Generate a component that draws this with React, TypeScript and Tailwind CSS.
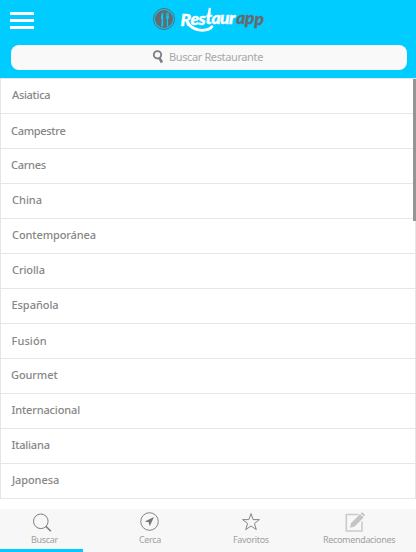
import React from "react";

const categories = [
  { name: "Asiatica", cls: "pl-[11px] tracking-[-0.3px]" },
  { name: "Campestre", cls: "pl-[10px] pt-[2px] tracking-[-0.3px]" },
  { name: "Carnes", cls: "pl-[10px] tracking-[-0.3px]" },
  { name: "China", cls: "pl-[11px] tracking-[0px]" },
  { name: "Contemporánea", cls: "pl-[11px] tracking-[-0.1px]" },
  { name: "Criolla", cls: "pl-[11px] tracking-[-0.1px]" },
  { name: "Española", cls: "pl-[10.5px] tracking-[-0.05px]" },
  { name: "Fusión", cls: "pl-[10.5px] pt-[2px] tracking-[0.1px]" },
  { name: "Gourmet", cls: "pl-[10px] tracking-[-0.1px]" },
  { name: "Internacional", cls: "pl-[10.5px] tracking-[-0.15px]" },
  { name: "Italiana", cls: "pl-[10.5px] tracking-[-0.2px]" },
  { name: "Japonesa", cls: "pl-[11px] tracking-[-0.1px]" },
];

function Logo() {
  return (
    <svg width="116" height="32" viewBox="152 4 116 32" className="ml-[118px]">
      <circle cx="164" cy="19" r="10.5" fill="none" stroke="#5f6b70" strokeWidth="1" />
      <circle cx="164" cy="19" r="9" fill="#646b6e" />
      <path d="M162.800 12.500c-1.600 1.600-2 3.700-1.800 5.700.1.900.4 1.400.7 1.600l-.5 6.700h2V12.500z" fill="#00ccff" />
      <path d="M165.900 12.500v4.500q0 1.500 1 2l-.2 7.500h1.500l-.2-7.500q1-.5 1-2v-4.500h-.6v4h-.6v-4h-.7v4h-.6v-4z" fill="#00ccff" />
      <g fontFamily="Lato, sans-serif" fontWeight="900" fontStyle="italic" strokeLinejoin="round">
        <text x="180.500 190.500 198.500 205.500 211.500 220 229" y="25.500 25 24.500 24 23.800 23.800 23.800" fontSize="17.500" fill="#fff" stroke="#fff" strokeWidth="0.4">Restaur</text>
        <text x="236.300 245 254.500" y="24 24 24.500" fontSize="17.500" fill="#646b6e" stroke="#646b6e" strokeWidth="0.3">app</text>
      </g>
      <path d="M188.500 24c4 4.700 8.500 6.300 14 6.300 4.500 0 8-1.300 9.500-3.700" fill="none" stroke="#fff" strokeWidth="2.800" strokeLinecap="round" />
      <path d="M209.800 9 208.300 17" stroke="#fff" strokeWidth="2.500" strokeLinecap="round" />
    </svg>
  );
}

const textLabel = "block text-[9px] leading-3 tracking-[-0.33px] text-[#a0a0a0] whitespace-nowrap";

export default function App() {
  return (
    <div className="flex h-[552px] w-[416px] flex-col overflow-hidden bg-white font-['Noto_Sans',sans-serif]">
      <header className="h-[78px] shrink-0 bg-[#00ccff]">
        <div className="flex h-[45px] items-start pl-[10px] pt-1">
          <div className="mt-2 flex w-6 flex-col gap-1">
            <span className="h-[3px] bg-white" />
            <span className="h-[3px] bg-white" />
            <span className="h-[3px] bg-white" />
          </div>
          <Logo />
        </div>
        <div className="ml-[11px] flex h-[25px] w-[396px] items-center rounded-lg bg-[#f9f9f9] pl-[141px]">
          <svg width="12" height="14" viewBox="0 0 12 14" fill="none" stroke="#808080" className="-mt-px">
            <circle cx="5.500" cy="4.800" r="3.700" strokeWidth="1.900" />
            <path d="M7.500 8.200 9.900 12.500" strokeWidth="2.600" />
          </svg>
          <span className="-mt-px ml-[5px] whitespace-nowrap text-[11px] leading-4 tracking-[-0.38px] text-[#a8a8a8]">Buscar Restaurante</span>
        </div>
      </header>
      <main className="relative h-[421px] shrink-0 border border-[#e6e6e6]">
        <ul>
          {categories.map((c) => (
            <li key={c.name} className="h-[35px] border-b border-[#e6e6e6]">
              <div className={"flex h-[32px] items-center text-[11px] font-medium leading-4 text-[#868686] " + c.cls}>{c.name}</div>
            </li>
          ))}
        </ul>
        <div className="absolute -right-px top-0 h-[142px] w-[3px] bg-[#959595]" />
      </main>
      <nav className="mt-[10px] flex h-[43px] shrink-0 bg-[#f7f7f7]">
        <div className="flex w-[83px] flex-col justify-between">
          <div className="pl-[31px] pt-[3px]">
            <svg width="22" height="22" viewBox="0 0 22 22" fill="none" stroke="#7d7d7d" className="block">
              <circle cx="9.800" cy="9.300" r="7.300" strokeWidth="1" />
              <path d="m14.900 14.400 5 4.900" strokeWidth="1.500" />
            </svg>
            <span className={textLabel}>Buscar</span>
          </div>
          <div className="h-[3px] bg-[#00ccff]" />
        </div>
        <div className="w-[150px] pl-[56px] pt-[3px]">
          <svg width="22" height="22" viewBox="0 0 22 22" className="block">
            <circle cx="10.500" cy="9.500" r="8.800" fill="none" stroke="#858585" strokeWidth="1" />
            <path d="M15 5 5.800 9.600 9.700 10.300 10.700 14.200z" fill="#777" />
          </svg>
          <span className={textLabel}>Cerca</span>
        </div>
        <div className="w-[90px] pt-[3px]">
          <svg width="34" height="22" viewBox="0 0 34 22" className="block">
            <path d="m18 1.600 2.100 6h6.300l-5 3.900 1.900 6.100-5.300-3.600-5.300 3.600 1.900-6.100-5-3.900h6.300z" fill="none" stroke="#858585" strokeWidth="1" />
          </svg>
          <span className={textLabel}>Favoritos</span>
        </div>
        <div className="pt-[3px]">
          <svg width="46" height="22" viewBox="323 512 46 22" className="block">
            <path d="M358.500 514.500h-12.200v16.500h15.700v-9.500" fill="none" stroke="#cbcbcb" strokeWidth="1.600" />
            <path d="m350 527.800 1.100-4.700 9-9 3.500 3.500-9 9z" fill="#c4c4c4" />
            <path d="m361 513.200 1-.9 3 3-1 .9z" fill="#b5b5b5" />
          </svg>
          <span className={textLabel}>Recomendaciones</span>
        </div>
      </nav>
    </div>
  );
}
